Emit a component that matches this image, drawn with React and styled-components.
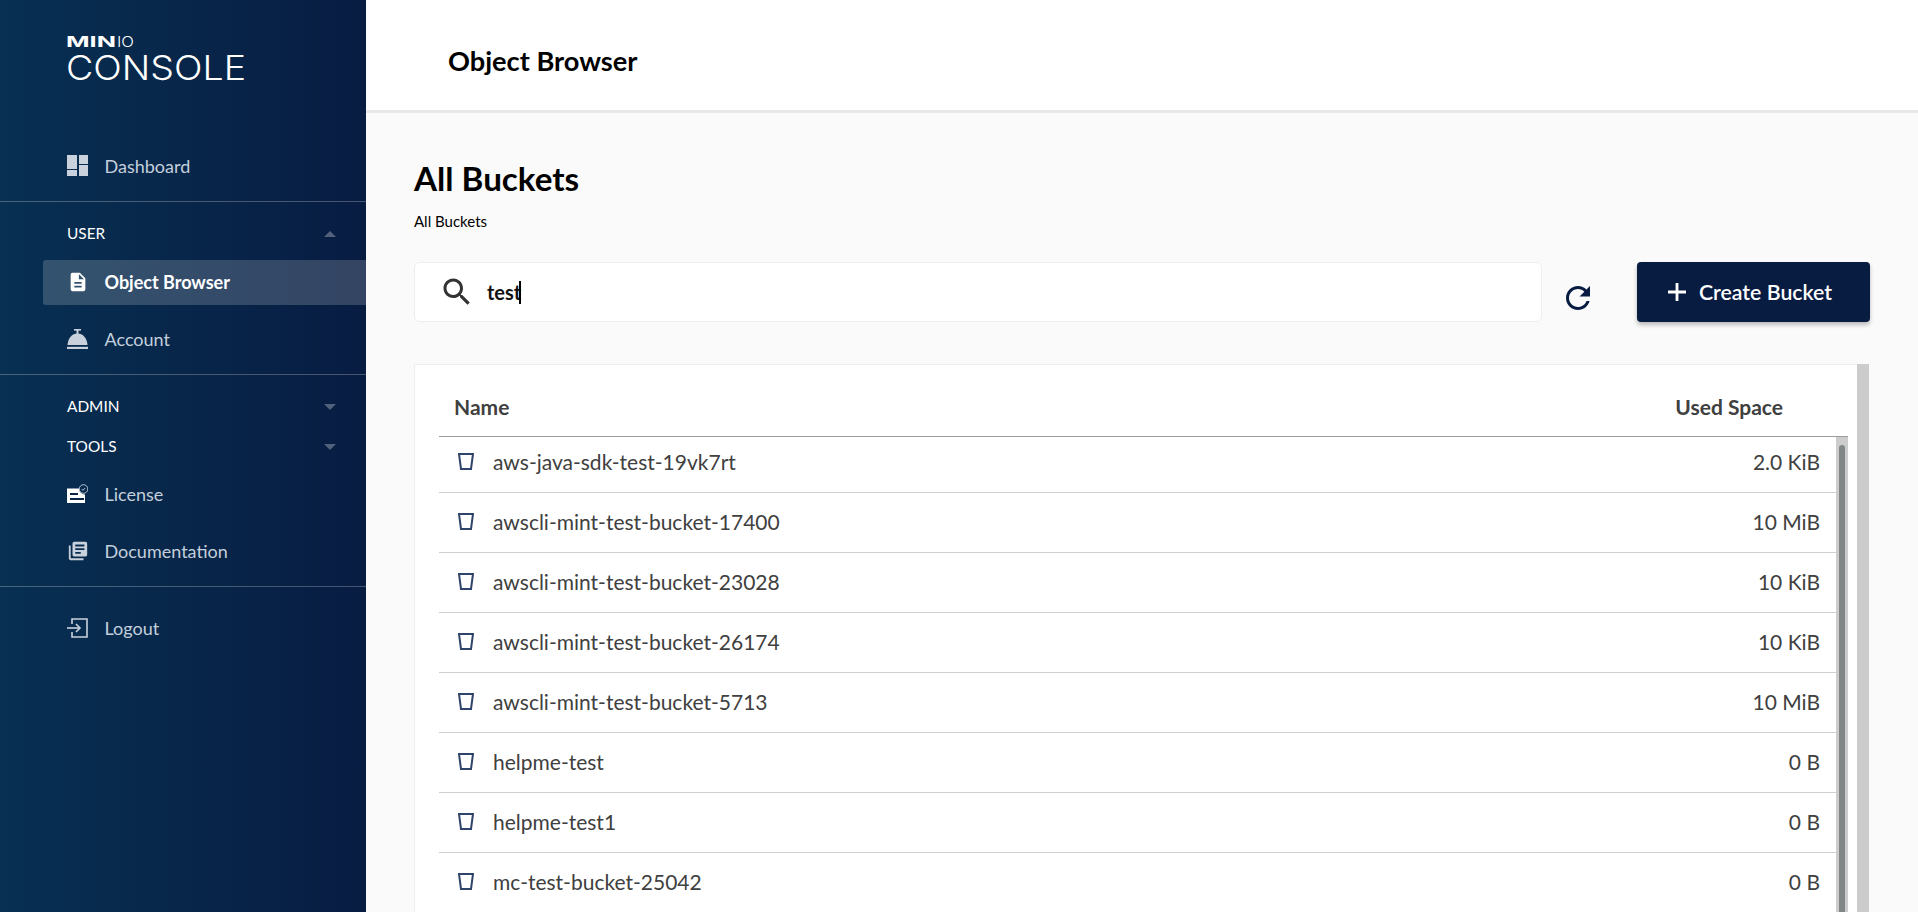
import React from 'react';
import styled, { createGlobalStyle } from 'styled-components';

const GlobalStyle = createGlobalStyle`
  html, body {
    margin: 0;
    padding: 0;
    height: 100%;
    overflow: hidden;
  }
  body {
    font-family: Lato, "Open Sans", "Liberation Sans", sans-serif;
    background: #fafafa;
  }
`;

const AppWrapper = styled.div`
  display: flex;
  width: 1918px;
  height: 912px;
  overflow: hidden;
`;

const Sidebar = styled.aside`
  flex: 0 0 366px;
  display: flex;
  flex-direction: column;
  background: linear-gradient(90deg, #073052 0%, #081c42 100%);
`;

const LogoBlock = styled.div`
  height: 144px;
  padding: 34px 0 0 66px;
  box-sizing: border-box;

  svg {
    display: block;
    overflow: visible;
  }
`;

const Divider = styled.div`
  height: 1px;
  margin-top: ${p => p.$top}px;
  background: rgba(255, 255, 255, 0.25);
`;

const NavItem = styled.a`
  display: flex;
  align-items: center;
  box-sizing: border-box;
  height: 45px;
  margin-top: ${p => p.$top || 0}px;
  margin-left: 43px;
  padding: 0 0 2px 24px;
  border-radius: 3px 0 0 3px;
  font-size: 18px;
  font-weight: ${p => (p.$active ? 700 : 400)};
  color: ${p => (p.$active ? '#ffffff' : '#c4d0dc')};
  background: ${p => (p.$active ? 'rgba(255, 255, 255, 0.18)' : 'transparent')};
`;

const NavIcon = styled.span`
  display: flex;
  flex: 0 0 37.5px;
  align-items: center;
  color: ${p => (p.$active ? '#ffffff' : '#c9d2dc')};
`;

const SectionHead = styled.div`
  display: flex;
  align-items: center;
  justify-content: space-between;
  box-sizing: border-box;
  height: 40px;
  margin-top: ${p => p.$top || 0}px;
  padding: 0 30px 1px 67px;
  font-size: 15.4px;
  color: #ffffff;
`;

const Arrow = styled.span`
  width: 0;
  height: 0;
  margin-top: 3px;
  border-left: 6px solid transparent;
  border-right: 6px solid transparent;
  border-top: ${p => (p.$up ? '0' : '6px solid rgba(255, 255, 255, 0.3)')};
  border-bottom: ${p => (p.$up ? '6px solid rgba(255, 255, 255, 0.3)' : '0')};
`;

const Main = styled.main`
  flex: 1;
  min-width: 0;
  display: flex;
  flex-direction: column;
`;

const TopBar = styled.header`
  flex: 0 0 113px;
  box-sizing: border-box;
  display: flex;
  align-items: center;
  padding: 10px 0 0 82px;
  background: #ffffff;
  border-bottom: 3px solid #e8e8e8;
`;

const PageTitle = styled.h1`
  margin: 0;
  font-size: 27.2px;
  font-weight: 700;
  color: #000000;
`;

const Content = styled.div`
  flex: 1;
  min-height: 0;
  display: flex;
  flex-direction: column;
  padding: 45px 48px 0;
`;

const Heading = styled.h2`
  margin: 0;
  font-size: 33.2px;
  line-height: 40px;
  font-weight: 700;
  color: #000000;
`;

const SubHeading = styled.div`
  margin-top: 13px;
  font-size: 15px;
  line-height: 20px;
  color: #000000;
`;

const ActionRow = styled.div`
  display: flex;
  align-items: center;
  height: 60px;
  margin-top: 31px;
`;

const SearchBox = styled.div`
  display: flex;
  flex: 0 0 1128px;
  box-sizing: border-box;
  align-items: center;
  height: 60px;
  padding: 0 0 0 24px;
  background: #ffffff;
  border: 1px solid #eeeeee;
  border-radius: 5px;
  color: #333333;
`;

const SearchText = styled.span`
  margin-left: 12px;
  font-size: 20px;
  font-weight: 700;
  color: #111111;
  line-height: 24px;
`;

const Caret = styled.span`
  width: 2px;
  height: 23px;
  margin-left: -2px;
  background: #000000;
`;

const ReloadButton = styled.button`
  display: flex;
  flex: 0 0 24px;
  height: 24px;
  margin: 12px 47px 0 24px;
  padding: 0;
  border: 0;
  background: none;
  color: #081c42;
`;

const CreateButton = styled.button`
  display: flex;
  flex: 0 0 233px;
  box-sizing: border-box;
  align-items: center;
  justify-content: center;
  gap: 13px;
  height: 60px;
  padding: 0 7px 0 0;
  border: 0;
  border-radius: 4px;
  background: #081c42;
  color: #ffffff;
  font-family: inherit;
  font-size: 21.3px;
  font-weight: 600;
  box-shadow: 0 3px 4px rgba(0, 0, 0, 0.25);
`;

const TableRow = styled.div`
  flex: 1;
  min-height: 0;
  display: flex;
  margin-top: 42px;
  margin-right: 1px;
`;

const Card = styled.section`
  flex: 1;
  min-width: 0;
  display: flex;
  flex-direction: column;
  box-sizing: border-box;
  padding-left: 24px;
  padding-right: 9px;
  background: #ffffff;
  border-top: 1px solid #eeeeee;
  border-left: 1px solid #eeeeee;
`;

const Track = styled.div`
  flex: 0 0 12px;
  background: #cccccc;
`;

const TableHead = styled.div`
  display: flex;
  flex: 0 0 72px;
  box-sizing: border-box;
  align-items: center;
  justify-content: space-between;
  padding: 12px 65px 0 15px;
  font-size: 21px;
  font-weight: 700;
  color: #404040;
  border-bottom: 1px solid #9c9c9c;
`;

const TableBody = styled.div`
  flex: 1;
  min-height: 0;
  display: flex;
`;

const Rows = styled.div`
  flex: 1;
  min-width: 0;
`;

const BodyTrack = styled.div`
  flex: 0 0 12px;
  box-sizing: border-box;
  padding: 8px 3px 0;
  background: #cccccc;
`;

const Thumb = styled.div`
  height: 100%;
  border-radius: 3px 3px 0 0;
  background: #808686;
`;

const BucketRow = styled.div`
  display: flex;
  box-sizing: border-box;
  align-items: center;
  justify-content: space-between;
  height: 60px;
  padding: 0 16px 2px 19px;
  font-size: 21px;
  color: #404040;
  border-bottom: 1px solid #cfcfcf;

  &:first-child {
    height: 56px;
    padding-bottom: 6px;
  }
`;

const BucketName = styled.span`
  display: flex;
  align-items: center;
  gap: 19px;
`;

const DashboardIcon = () => (
  <svg width="21" height="21" viewBox="0 0 21 21" fill="currentColor">
    <rect x="0" y="0" width="10" height="14" />
    <rect x="0" y="15" width="10" height="6" />
    <rect x="12" y="0" width="9" height="9" />
    <rect x="12" y="10" width="9" height="11" />
  </svg>
);

const FileIcon = () => (
  <svg width="22" height="22" viewBox="0 0 24 24" fill="currentColor">
    <path d="M14 2H6c-1.1 0-1.99.9-1.99 2L4 20c0 1.1.89 2 1.99 2H18c1.1 0 2-.9 2-2V8l-6-6zm2 16H8v-2h8v2zm0-4H8v-2h8v2zm-3-5V3.5L18.5 9H13z" />
  </svg>
);

const BellIcon = () => (
  <svg width="21" height="20" viewBox="0 0 21 20" fill="currentColor">
    <rect x="7" y="0" width="7" height="1.6" />
    <rect x="9.5" y="1" width="2" height="4" />
    <path d="M0.5 16 C1 9 5 4.5 10.5 4.5 S20 9 20.5 16 Z" />
    <rect x="0" y="17.8" width="21" height="2.2" />
  </svg>
);

const LicenseIcon = () => (
  <svg width="21" height="20" viewBox="0 0 21 20">
    <path d="M0 4.5 H12 A6 6 0 0 0 18 10.5 V19 H0 Z" fill="#ffffff" />
    <rect x="3" y="9" width="8" height="2" fill="#0a2447" />
    <rect x="3" y="14" width="14" height="2" fill="#0a2447" />
    <circle cx="16.5" cy="5" r="4.3" fill="none" stroke="#c9d2dc" strokeWidth="0.9" />
    <path d="M14.8 5.1 L16 6.4 L18.2 3.9" fill="none" stroke="#c9d2dc" strokeWidth="0.9" />
  </svg>
);

const DocsIcon = () => (
  <svg width="22" height="22" viewBox="0 0 24 24" fill="currentColor">
    <path d="M4 6H2v14c0 1.1.9 2 2 2h14v-2H4V6zm16-4H8c-1.1 0-2 .9-2 2v12c0 1.1.9 2 2 2h12c1.1 0 2-.9 2-2V4c0-1.1-.9-2-2-2zm-1 9H9V9h10v2zm-4 4H9v-2h6v2zm4-8H9V5h10v2z" />
  </svg>
);

const LogoutIcon = () => (
  <svg width="21" height="20" viewBox="0 0 21 20" fill="none" stroke="currentColor" strokeWidth="1.6">
    <path d="M5 6 V1 H20 V19 H5 V14" />
    <path d="M0 10 H13" />
    <path d="M9 6 L13 10 L9 14" />
  </svg>
);

const SearchIcon = () => (
  <svg width="36" height="36" viewBox="0 0 24 24" fill="currentColor">
    <path d="M15.5 14h-.79l-.28-.27C15.41 12.59 16 11.11 16 9.5 16 5.91 13.09 3 9.5 3S3 5.91 3 9.5 5.91 16 9.5 16c1.61 0 3.09-.59 4.23-1.57l.27.28v.79l5 4.99L20.49 19l-4.99-5zm-6 0C7.01 14 5 11.99 5 9.5S7.01 5 9.5 5 14 7.01 14 9.5 11.99 14 9.5 14z" />
  </svg>
);

const ReloadIcon = () => (
  <svg width="24" height="24" viewBox="4 4 16 16" fill="currentColor">
    <path d="M17.65 6.35C16.2 4.9 14.21 4 12 4c-4.42 0-7.99 3.58-7.99 8s3.57 8 7.99 8c3.73 0 6.84-2.55 7.73-6h-2.08c-.82 2.33-3.04 4-5.65 4-3.31 0-6-2.69-6-6s2.69-6 6-6c1.66 0 3.14.69 4.22 1.78L13 11h7V4l-2.35 2.35z" />
  </svg>
);

const PlusIcon = () => (
  <svg width="18" height="18" viewBox="0 0 18 18" stroke="currentColor" strokeWidth="2.8">
    <path d="M9 0 V18 M0 9 H18" />
  </svg>
);

const BucketIcon = () => (
  <svg width="16" height="17" viewBox="0 0 16 17" fill="none" stroke="#2f4468" strokeWidth="2">
    <path d="M1 1 H15 L13 16 H3 Z" />
  </svg>
);

const Logo = () => (
  <svg width="190" height="56" viewBox="0 0 190 56" fill="#ffffff" fontFamily="Inter, sans-serif">
    <text x="0" y="13" fontSize="14" fontWeight="700" textLength="50" lengthAdjust="spacingAndGlyphs">MIN</text>
    <text x="51" y="13" fontSize="14" fontWeight="300" textLength="17" lengthAdjust="spacingAndGlyphs">IO</text>
    <text x="0" y="46" fontSize="34" fontWeight="350" textLength="180" lengthAdjust="spacingAndGlyphs">CONSOLE</text>
  </svg>
);

const buckets = [
  { name: 'aws-java-sdk-test-19vk7rt', size: '2.0 KiB' },
  { name: 'awscli-mint-test-bucket-17400', size: '10 MiB' },
  { name: 'awscli-mint-test-bucket-23028', size: '10 KiB' },
  { name: 'awscli-mint-test-bucket-26174', size: '10 KiB' },
  { name: 'awscli-mint-test-bucket-5713', size: '10 MiB' },
  { name: 'helpme-test', size: '0 B' },
  { name: 'helpme-test1', size: '0 B' },
  { name: 'mc-test-bucket-25042', size: '0 B' }
];

const App = () => (
  <AppWrapper>
    <GlobalStyle />
    <Sidebar>
      <LogoBlock>
        <Logo />
      </LogoBlock>
      <NavItem>
        <NavIcon><DashboardIcon /></NavIcon>
        Dashboard
      </NavItem>
      <Divider $top={12} />
      <SectionHead $top={11}>
        USER
        <Arrow $up />
      </SectionHead>
      <NavItem $top={7} $active>
        <NavIcon $active><FileIcon /></NavIcon>
        Object Browser
      </NavItem>
      <NavItem $top={12}>
        <NavIcon><BellIcon /></NavIcon>
        Account
      </NavItem>
      <Divider $top={12} />
      <SectionHead $top={11}>
        ADMIN
        <Arrow />
      </SectionHead>
      <SectionHead>
        TOOLS
        <Arrow />
      </SectionHead>
      <NavItem $top={6}>
        <NavIcon><LicenseIcon /></NavIcon>
        License
      </NavItem>
      <NavItem $top={12}>
        <NavIcon><DocsIcon /></NavIcon>
        Documentation
      </NavItem>
      <Divider $top={12} />
      <NavItem $top={19}>
        <NavIcon><LogoutIcon /></NavIcon>
        Logout
      </NavItem>
    </Sidebar>
    <Main>
      <TopBar>
        <PageTitle>Object Browser</PageTitle>
      </TopBar>
      <Content>
        <Heading>All Buckets</Heading>
        <SubHeading>All Buckets</SubHeading>
        <ActionRow>
          <SearchBox>
            <SearchIcon />
            <SearchText>test</SearchText>
            <Caret />
          </SearchBox>
          <ReloadButton><ReloadIcon /></ReloadButton>
          <CreateButton>
            <PlusIcon />
            Create Bucket
          </CreateButton>
        </ActionRow>
        <TableRow>
          <Card>
            <TableHead>
              <span>Name</span>
              <span>Used Space</span>
            </TableHead>
            <TableBody>
              <Rows>
                {buckets.map(bucket => (
                  <BucketRow key={bucket.name}>
                    <BucketName>
                      <BucketIcon />
                      {bucket.name}
                    </BucketName>
                    <span>{bucket.size}</span>
                  </BucketRow>
                ))}
              </Rows>
              <BodyTrack>
                <Thumb />
              </BodyTrack>
            </TableBody>
          </Card>
          <Track />
        </TableRow>
      </Content>
    </Main>
  </AppWrapper>
);

export default App;
